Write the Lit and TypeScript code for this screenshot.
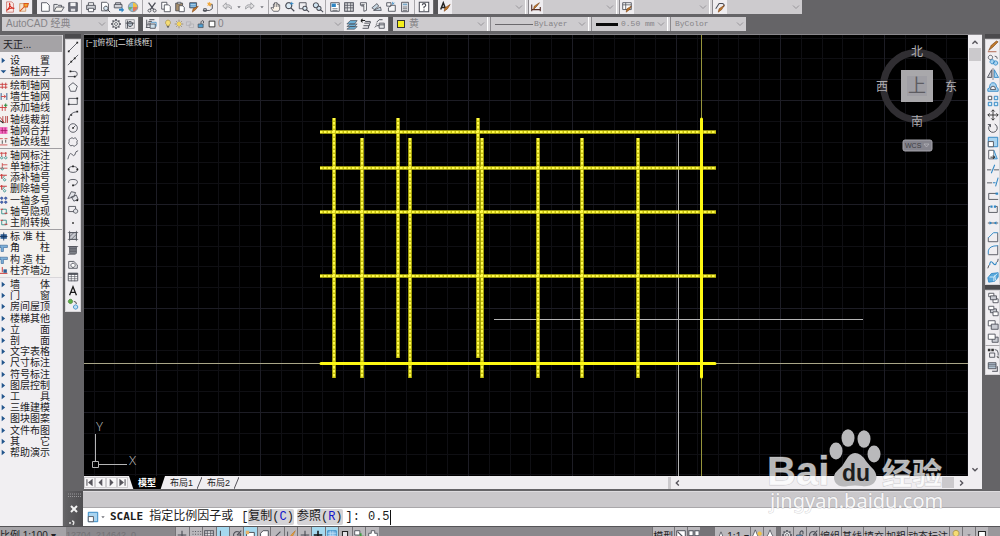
import { LitElement, html, svg, css } from "lit";
import { customElement, property } from "lit/decorators.js";

type Seg = [d: string, fill?: string, stroke?: string, width?: number];
const K = "#4a4c55";
const B = "#2f86c4";
const L = "#a9d4f0";
const O = "#c07a2c";
const N = "none";

/* Every icon is drawn in a 14 x 14 box. */
const ICONS: Record<string, Seg[]> = {
  pdf: [["M3 1h6l2 2v10h-8z", "#fbe9e6", "#b9483c", 0.7], ["M3 11c3-2 5-6 3.500-8c-1 2 2 6 5.500 5.500c-3-1-7 1-9 2.500z", N, "#d4271c", 1.3]],
  pdfedit: [["M2 3h7v9h-7z", "#f6e3cf", "#c0783c", 0.7], ["M2 12l5-5M7 3l5 0l-1 4l-4 0z", "#f0a52c", "#d8541c", 1.2]],
  doc: [["M3 2h6l3 3v7h-9z", "#fdfdfd", K, 1]],
  open: [["M1 12v-8h4l1 1h4v2", "#e8e8ea", K, 1], ["M1 12l3-5h9l-3 5z", "#f4f2ee", K, 1]],
  save: [["M2 2h10v10h-10z", "#70727c", K, 1], ["M4 2h6v4h-6z", "#f2f2f4"], ["M4.500 9h5v3h-5z", "#dcdce0"]],
  print: [["M4 5v-3h6v3", "#fff", K, 1], ["M2 5h10v5h-10z", "#d2d3d8", K, 1.1], ["M4 8.500h6v4h-6z", "#fff", K, 1]],
  preview: [["M3 1.500h6l2 2v8h-8z", "#fff", K, 1], ["M8 6a2.500 2.500 0 1 0 .1 0M10 10l3 3", "#dceaf4", K, 1.1]],
  plot: [["M3 4v-2h6v2M1.500 4h9v4h-9z", "#d2d3d8", K, 1], ["M7 9h3v-2l3 3.500l-3 3v-2h-3z", B]],
  pie: [["M7 1.500a5.500 5.500 0 1 0 .1 0z", "#8fc0dd", "#777a80", 0.8], ["M7 7v-5a5 5 0 0 1 5 5z", "#f0c046"], ["M7 7h5a5 5 0 0 1-5 5z", "#e27a5c"], ["M7 7l-4 4a5 5 0 0 1-1-4z", "#6fb36a"]],
  cut: [["M3 2l6 8M11 2l-6 8", N, K, 1.5], ["M4 9.500a1.700 1.700 0 1 0 .1 0M10 9.500a1.700 1.700 0 1 0 .1 0", N, K, 1.1]],
  copy: [["M2 1.500h6v8h-6z", "#fff", K, 1], ["M5 4.500h5l2 2v6h-7z", "#fff", K, 1]],
  paste: [["M2 2.500h8v9h-8z", "#a98f6a", K, 1], ["M4 1.500h4v2h-4z", "#ddd", K, 0.8], ["M6 5.500h4l2 2v5h-6z", "#fff", K, 1]],
  brush: [["M2 2h8v6h-8z", "#4e94c8", K, 1], ["M3 4h6M3 6h6", N, "#dcecf6", 0.8], ["M12 6l-3 4l-4 3l1-4z", O, "#8a4b17", 0.7]],
  match: [["M1 11h8l3-2M2 9v3h3v-3zM9 5l3-1v5", N, K, 1.1], ["M9 1l1 2l2 0l-2 2l0 2l-2-2l-2 1l1-2l-1-2l2 0z", "#f0a83c"]],
  undo: [["M2 6l4-4v2.500h3q4 1 3 5q-1-2-3-2.500h-3v2.500z", "#e0dfe1", "#8f9095", 0.9]],
  redo: [["M12 6l-4-4v2.500h-3q-4 1-3 5q1-2 3-2.500h3v2.500z", "#e0dfe1", "#8f9095", 0.9]],
  down: [["M5 6h4l-2 2.500z", "#707178"]],
  hand: [["M4 12l-3-4l1.500-.5l1.500 1v-5l1.300 0v-1.500h1.500v0h1.500v1.500h1.500v1h1.500v5l-1.500 2.500z", "#fbf3e8", K, 0.9], ["M5.500 3v4M7.500 3v4M9.500 4v3", N, K, 0.7]],
  zoomrt: [["M5.500 2a3.500 3.500 0 1 0 .1 0M8 8l4 4", "#dceaf4", K, 1.4], ["M9 1v4M7 3h4", N, B, 1]],
  zoomwin: [["M1.500 2h8v7h-8z", N, K, 1], ["M8 6a2.500 2.500 0 1 0 .1 0M10 10l3 3", "#dceaf4", K, 1.2]],
  zoomprev: [["M4.500 2a3 3 0 1 0 .1 0M8 6a2.500 2.500 0 1 0 .1 0M10 10l3 3", "#d0e4f2", K, 1.2]],
  props: [["M2 2h10v10h-10z", "#fff", K, 1], ["M3 3h5v4h-5z", B], ["M4 9h6M4 11h6M9.500 4h2", N, K, 0.8]],
  grid4: [["M2 2h10v10h-10z", "#e7e7ea", K, 1.2], ["M2 5h10M2 8h10M5 2v10M9 2v10", N, K, 0.9]],
  palette: [["M4 2h7v9l-3 1v-7h-4z", "#fff", K, 1], ["M5 4h4M5 6h3", N, K, 0.8]],
  sheets: [["M1 8l6-5l2 3l-5 4zM3 11l8-4l1 4z", "#c5d5e0", K, 0.9]],
  markup: [["M2 2h5v4h-5zM7 5h5v7h-8v-4z", "#f4f4f6", K, 1], ["M9 1v3M11 2l-2 2", N, B, 1]],
  calc: [["M3 1.500h8v11h-8z", "#e9e9ec", K, 1], ["M4.500 3h5v2h-5z", "#7aa8c8"], ["M4.500 7h5M4.500 9h5M4.500 11h5", N, K, 0.8]],
  help: [["M1.500 1.500h11v11h-11z", "#fff", K, 1.2], ["M5 5q0-2 2-2t2 2q0 1.300-2 2v1.500M7 10v1.500", N, K, 1.4]],
  textstyle: [["M2 10l3-8l3 8M3 7.500h4", N, "#222", 1.7], ["M13 4l-3 5l-4 3l1-4z", O, "#7b3f14", 0.7]],
  dimstyle: [["M2 4v8M12 7v5M2 10h10", N, "#55302a", 1.3], ["M11 2l-3 4l-4 4l1-4z", O, "#7b3f14", 0.7]],
  tablestyle: [["M2 2h10v8h-10z", "#fff", K, 1], ["M2 4.500h10M5.500 2v8", N, K, 0.9], ["M12 6l-2 4l-4 3l1-4z", O, "#7b3f14", 0.7]],
  leader: [["M2 9l4-6h4q3 1 1 4", N, K, 1.2], ["M12 5l-3 5l-4 3l1-4z", O, "#7b3f14", 0.7]],
  gear: [["M7 1.200v2M7 10.800v2M1.200 7h2M10.800 7h2M3 3l1.400 1.400M9.600 9.600l1.400 1.400M11 3l-1.400 1.400M4.400 9.600l-1.400 1.400", N, K, 1.8], ["M7 3a4 4 0 1 0 .1 0M7 5.300a1.700 1.700 0 1 0 .1 0", "#eee", K, 1]],
  wsgear: [["M2 2h10v10h-10z", N, "#8b8d94", 1], ["M7 4a3 3 0 1 0 .1 0M2 6h10M4 3v9", "#b0bcc6", K, 1.1]],
  layers: [["M5 2h6M4 4h4M3 6h4M2 8h4M1 11h5M2 2v9", N, K, 1.1], ["M6 7h6v5h-6z", "#cfe0ec", K, 1], ["M7 5h6v5", N, B, 0.9]],
  bulb: [["M7 1.500a3.600 3.600 0 0 0-2 6.500v1.500h4v-1.500a3.600 3.600 0 0 0-2-6.500z", "#f5dc74", "#9c8436", 0.8], ["M5.500 11h3", N, "#444", 1.6]],
  sun: [["M7 1v12M1 7h12M3 3l8 8M11 3l-8 8", N, "#8a774a", 0.9], ["M7 4a3 3 0 1 0 .1 0z", "#f4d55c"]],
  vpf: [["M2 4h6v5h-6zM6 7h6v5h-6z", "#cfced2", "#aaa9ae", 0.9]],
  lock: [["M3 7h7v5h-7z", "#4f9fd2", K, 1], ["M7 7v-3q1.500-3 3.500-1v3", N, K, 1.2]],
  square: [["M3 3h8v8h-8z", "#fff", "#222", 1.2]],
  layfirst: [["M1 7l4-4h8l-3 4zM1 10l4-3h8l-3 3zM1 13l4-3h8l-3 3z", "#6fb1d8", K, 0.8]],
  layprev: [["M5 6h7v-2h-6M4 9h7v-2M3 12h7v-3", N, K, 1.1], ["M1 3h5M1 3l2-2M1 3l2 2", N, "#222", 1.2]],
  laystate: [["M3 5l3-3h4M2 8l2-2M1 11l2-2h4", N, K, 1.1], ["M6 6h6v6h-6z", "#e7e7ea", K, 1], ["M6 8h6", N, K, 1]],
  /* draw */
  line: [["M2 12L12 2", N, K, 1], ["M1 11h2v2h-2zM11 1h2v2h-2z", "#222"]],
  xline: [["M1 13L13 1", N, K, 1], ["M4 8h2v2h-2zM8 4h2v2h-2z", "#222"]],
  pline: [["M4 4h5q3 0 3 3t-3 3h-8", N, K, 1], ["M3 3h2v2h-2zM8 9h2v2h-2z", "#222"]],
  polygon: [["M7 2l5 4l-2 6h-6l-2-6z", "#f2f2f4", K, 1]],
  rect: [["M2 4h10v7h-10z", N, K, 1], ["M1 10h2v2h-2zM11 3h2v2h-2z", "#222"]],
  arc: [["M2 12q1-8 10-9", N, K, 1], ["M1 11h2v2h-2zM4 6h2v2h-2zM11 2h2v2h-2z", "#222"]],
  circle: [["M7 2a5 5 0 1 0 .1 0M7 7l3-3", N, K, 1], ["M6 6h2v2h-2z", "#222"]],
  cloud: [["M4 3q2-2 3.500 0q3-2 3.500 1q2 1 .5 3q1.500 3-1.500 4q-1.500 2-3.500 0q-3 1.500-3.500-1q-2-1-.5-3.500q-1-3 1.500-3.500z", N, K, 1]],
  spline: [["M1 12q2-9 4.500-6t3.500 1q1-5 4-5", N, K, 1]],
  ellipse: [["M7 4a5.500 3.500 0 1 0 .1 0", N, K, 1], ["M6 3h2v2h-2zM1 6.500h2v2h-2zM11 6.500h2v2h-2z", "#222"]],
  earc: [["M2 8q-1-4 5-4t5 4q-1 3-5 3", N, K, 1], ["M6 10h2v2h-2z", "#222"]],
  insert: [["M1 10l4-8l5 1l-2 5zM5 8l6-2l2 5l-5 2z", "#e2e3e8", K, 1], ["M11 11h2v2h-2z", "#111"]],
  block: [["M2 4h8v6h-8z", N, K, 1], ["M10 7a2.500 2.500 0 1 0 .1 0", "#e2e3e8", K, 1]],
  point: [["M6 6h2v2h-2z", "#222"]],
  hatch: [["M3 3h8v8h-8z", "#c8c9d0", K, 0.8], ["M1 3h12M1 11h12M3 1v12M11 1v12M3 8l5-5M5 11l6-6", N, K, 0.8]],
  gradient: [["M3 3h8v8h-8z", "#8d8f98", K, 0.8], ["M1 3h12M3 5h8M3 7h8M3 9h8M1 12h9", N, K, 0.9]],
  region: [["M2 12v-8h6l4 4v4z", N, K, 1], ["M7 6a2.500 2.500 0 1 0 .1 0", "#fff", K, 1]],
  table: [["M1.500 2.500h11v9h-11z", "#fff", K, 1], ["M1.500 3.500h11", N, K, 2], ["M1.500 6.500h11M1.500 9h11M5 3v9M9 3v9", N, K, 0.7]],
  mtext: [["M3 12l4-10l4 10M4.500 8.500h5", N, "#1a1a1a", 1.5]],
  addsel: [["M4 1.500a2.500 2.500 0 1 0 .1 0z", "#5eb046", "#3a7a2c", 0.8], ["M10 8a2.500 2.500 0 1 0 .1 0z", "#bfe0f4", B, 1], ["M8 4q3 0 3 3", N, "#333", 1]],
  /* modify */
  erase: [["M13 1l-6 6l-5 4l3-6l6-5z", O, "#774115", 0.7], ["M1 12.500h10", N, "#a8543c", 1]],
  copyobj: [["M4 1.500a2.500 2.500 0 1 0 .1 0M9 2.500q3 0 3 3", N, K, 1], ["M6 6.500a2.500 2.500 0 1 0 .1 0M10 8a2.500 2.500 0 1 0 .1 0", L, B, 1]],
  mirror: [["M5.500 2v9h-5z", "#cfd0d6", K, 1], ["M8.500 2v9h5z", L, B, 1], ["M7 0v14", N, K, 0.7]],
  offset: [["M1 12q-1-4 2-4q0-6 4-6t4 5q3 1 2 5z", L, B, 1], ["M4 10q0-4 3-4t3 4z", "#f2f2f4", K, 1]],
  array: [["M1.500 1.500h4v4h-4z", "#fff", K, 1.1], ["M8.500 1.500h4v4h-4zM1.500 8.500h4v4h-4zM8.500 8.500h4v4h-4z", "#d4ebf8", B, 1.1]],
  move: [["M7 1v12M1 7h12M5 3l2-2l2 2M5 11l2 2l2-2M3 5l-2 2l2 2M11 5l2 2l-2 2", N, "#333", 1.1]],
  rotate: [["M4 3a5 5 0 1 0 5-.5M4 3v3M4 3h-3", N, K, 1.1]],
  scale: [["M1.500 1.500h11v11h-11z", L, B, 1.1], ["M1.500 6.500h6v6h-6z", "#fff", K, 1]],
  stretch: [["M2 1.500h6v10h-6z", "#fff", K, 1], ["M8 1.500l4 10h-4", L, B, 1], ["M4 9.500h5M7 7.500l2 2l-2 2", N, "#222", 1.1]],
  trim: [["M0 8h5M8 8h6", N, K, 1], ["M9 2l-4 10", N, B, 1.2]],
  extend: [["M0 8h6", N, K, 1], ["M7 8h3M13 2l-3 10", N, B, 1.2]],
  breakpt: [["M11 4h-9v7h11", N, K, 1], ["M10 3h3v2.500h-3z", B]],
  breakit: [["M4 4h-2v7h10v-7h-2", N, K, 1], ["M4 3h2.500v2.500h-2.500zM8 3h2.500v2.500h-2.500z", B]],
  join: [["M1 7h12", N, K, 1], ["M3 5l3 2l-3 2zM11 5l-3 2l3 2z", B]],
  chamfer: [["M1.500 12.500v-5M12.500 2v10.500h-11", N, K, 1], ["M1.500 8l6-6h5", N, B, 1.1]],
  fillet: [["M1.500 12.500h11v-11", N, K, 1], ["M1.500 12v-4q1-6 11-6", N, B, 1.1]],
  blend: [["M1 12q1-4 2-4M11 5q2 0 2-4", N, K, 1.1], ["M3 8q1-6 4-2t4-1", N, B, 1.3]],
  explode: [["M1 8l4-5l8-1l0 5l-4 5l-7 1z", "#5aa9dc", B, 1], ["M3 7h5v5M8 7l4-4M10 11l-1-6", N, "#e6f3fb", 1]],
  front: [["M2 1.500h6v4h-6zM7 8h6v4.500h-6z", "#fff", K, 1], ["M4 4.500h7v4.500h-7z", "#c9cbd2", K, 1]],
  back: [["M4 4.500h7v4.500h-7z", "#c9cbd2", K, 1], ["M2 1.500h6v4h-6zM7 8h6v4.500h-6z", "#fff", K, 1]],
  above: [["M1.500 2h8v6h-8z", "#fff", K, 1], ["M5 6h8v6h-8z", "#c9cbd2", K, 1]],
  under: [["M6 6h7v6h-7z", "#c9cbd2", K, 1], ["M1.500 2.500h8v6h-8z", "#fff", K, 1]],
  annofront: [["M1 2h3v3h-3zM5 2h3v3h-3z", "#333"], ["M3 7h6v5h-6zM9 3q4 0 4 4v3", N, K, 1], ["M11 11h2.500v2.500z", "#111"]],
  hatchback: [["M1.500 2h9v7h-9z", "#b3c3d2", K, 1], ["M1.500 4h9M1.500 6h9", N, K, 0.7], ["M12 6v6h-6", N, K, 1.2]],
  /* drafting modes */
  infer: [["M2 7h10M7 2v10", N, K, 1.3], ["M7 8h4v4h-4z", K]],
  snap: [["M3 3h1M6 3h1M9 3h1M12 3h1M3 6h1M6 6h1M9 6h1M12 6h1M3 9h1M6 9h1M9 9h1M3 12h1M6 12h1M9 12h1", N, K, 1.2]],
  ortho: [["M4 2v9h9", N, K, 1.2]],
  polar: [["M7 3a4 4 0 1 0 .1 0M7 7l5-5M7 7h5", N, K, 1.2]],
  osnap: [["M3 4h9v8h-9z", "#fff", K, 1.1], ["M2 2h4v4h-4z", "#e7b36a"]],
  osnap3: [["M3 5l3-3h6v7l-3 3h-6z", "#fff", K, 1.1]],
  otrack: [["M2 12L11 3M2 12h10", N, K, 1.2]],
  ducs: [["M3 3v9h9", N, K, 1], ["M12 2l-4 4l-2 3l3-1z", "#f0a83c", O, 0.8]],
  cross: [["M7 2v10M2 7h10", N, "#111", 1.8]],
  plus: [["M5 2h4v3h3v4h-3v3h-4v-3h-3v-4h3z", "#fff", K, 1]],
  tpy: [["M2 2h10v10h-10z", "#7db7e4", B, 1], ["M2 5h10M2 8h10M5 2v10M8 2v10", N, "#c9e4f7", 0.8]],
  qp: [["M4 3h6v9h-6z", "#e4e4e8", "#222", 1.2]],
  sc: [["M2 2h6v5h-6z", "#fff", K, 1], ["M9 5v8M5 9h8", N, "#3e9b3e", 2]],
  person: [["M7 1l2 5l4 6h-4l-2-3l-2 3h-4l4-6z", "#fff", K, 0.9]],
  personon: [["M5 1l2 5l3 6h-3l-2-3l-2 3h-3l3-6z", "#fff", K, 0.9], ["M10 3a2.500 2.500 0 1 0 .1 0z", "#f0c046"]],
  page: [["M2 2h10v10h-10z", "#fff", K, 1.1], ["M3 3l8 8", N, K, 1.4]],
  views: [["M1 2h5v6h-5zM8 2h5v6h-5z", "#fff", K, 1.2]],
  /* axis-net commands */
  tri: [["M3 2l6 5l-6 5z", "#22558c"]],
  tridown: [["M1 5h10l-5 5z", "#22558c"]],
  net: [["M4 2v11M10 2v11M0 5h13M0 10h13", N, "#c93a3a", 1.5]],
  wallnet: [["M2 1v12M12 1v12", N, "#22558c", 1.6], ["M2 7h8M7 4l3 3l-3 3", N, "#c93a3a", 1.5]],
  addax: [["M4 2v11M9 6v7M0 7h12", N, "#c93a3a", 1.5], ["M10 0v6M7 3h6", N, "#2d8a3a", 1.8]],
  trimax: [["M0 3l8 10M5 1v12M10 1v12M13 1v12", N, "#b03030", 1.5], ["M0 9l6 4", N, "#222", 2]],
  merge: [["M0 1h13v12h-13z", "#f36cc0"], ["M4 2v10M9 2v10M1 7h12", N, "#a01860", 1.3]],
  linetype: [["M0 2h5M8 2h5M0 13h13", N, "#c93a3a", 1.4], ["M4 5v6M10 4v5", N, "#333", 1.4]],
  dim2: [["M0 3h12M3 1v8M10 1v8", N, "#c93a3a", 1.5], ["M3 9a2 2 0 1 0 .1 0M10 9a2 2 0 1 0 .1 0", N, "#2a8a86", 1.5]],
  dim1: [["M0 10h13M4 1v8M4 4h9", N, "#c93a3a", 1.4], ["M4 9a2 2 0 1 0 .1 0", N, "#2a8a86", 1.5]],
  dimadd: [["M0 3h12M3 1v8", N, "#c93a3a", 2], ["M8 9a2 2 0 1 0 .1 0M8 4l-4 5", N, "#2a8a86", 1.5]],
  multi: [["M3 1a2 2 0 1 0 .1 0M10 1a2 2 0 1 0 .1 0M3 8a2 2 0 1 0 .1 0M10 8a2 2 0 1 0 .1 0", "#4f6fb8", "#223f8c", 1.3]],
  hide: [["M3 3h8v8h-8z", N, "#2a8a86", 1.5], ["M1 3h4M8 10h5", N, "#c93a3a", 2]],
  column: [["M1 3h11v8h-11z", "#2d5d94"], ["M6.500 0v14M0 7h13", N, "#16365c", 1.5]],
  corner: [["M0 3h13v4h-7v7h-4v-7h-2z", "#7db0d8", "#2d5d94", 1]],
  edge: [["M0 12h13M4 1v9", N, "#c93a3a", 1.7], ["M6 5h6v6h-6z", "#2d5d94"]],
};

function icon(name: string) {
  return html`<svg class="ico" viewBox="0 0 14 14" aria-hidden="true">
    ${(ICONS[name] ?? []).map(
      ([d, f, s, w]) => svg`<path d=${d} fill=${f ?? N} stroke=${s ?? N} stroke-width=${w ?? 0}></path>`
    )}
  </svg>`;
}

const chevron = html`<svg class="chev" viewBox="0 0 8 8" aria-hidden="true"><path d="M1 2.500l3 3l3-3" fill="none" stroke="#98969a"></path></svg>`;

const shared = css`
  * { box-sizing: border-box; }
  :host {
    font-family: "Liberation Sans", "Noto Sans CJK SC", sans-serif;
    font-size: 10px;
    line-height: 14px;
    color: #232225;
  }
  button, select, input { font: inherit; color: inherit; margin: 0; padding: 0; border: 0; background: none; border-radius: 0; outline: none; }
  button { display: flex; align-items: center; justify-content: center; flex: none; }
  .ico { width: 12px; height: 12px; display: block; flex: none; overflow: visible; }
`;

@customElement("cad-toolbars")
class CadToolbars extends LitElement {
  static styles = [shared, css`
    :host { display: flex; flex-direction: column; gap: 3px; padding-bottom: 3px; background: #656467; }
    .row { display: flex; height: 14px; padding-left: 2px; }
    .group { display: flex; flex: none; background: #efedf0; }
    .grip { flex: none; width: 5px; background: #565558; border-left: 1px solid #6d6c6f; }
    .seg { display: flex; padding: 0 2px; border-left: 1px solid #a9a7ab; }
    .seg.first { border: 0; padding: 0 1px; }
    .seg.tight { padding: 0; }
    .seg button { width: 14px; }
    .seg button.drop { width: 9px; }
    .combo { display: flex; align-items: center; flex: none; background: #cdcbce; padding: 0 2px 0 4px; color: #858387; gap: 1px; }
    .combo select { flex: 1; min-width: 0; appearance: none; height: 14px; }
    .mono { font-family: "Liberation Mono", "Noto Sans CJK SC", monospace; font-size: 8px; }
    .chev { width: 8px; height: 8px; flex: none; }
    .combo .ico { width: 10px; height: 10px; }
    .w73 { width: 73px; } .w75 { width: 75px; } .w94 { width: 94px; } .w97 { width: 97px; } .w106 { width: 106px; } .w185 { width: 185px; }
    .tool { width: 14px; }
    .gap { width: 4px; flex: none; background: #d9d7da; border-right: 1px solid #8b898d; border-left: 1px solid #fff; }
    .swatch { width: 8px; height: 8px; background: #f4ee1c; border: 1px solid #333; margin-right: 3px; }
    .thin { width: 38px; height: 1px; background: #6a686c; }
    .thick { width: 22px; height: 3px; background: #0a0a0a; margin-right: 2px; }
  `];

  private seg(names: string[], cls = "") {
    return html`<div class="seg ${cls}">${names.map((n) => html`<button class=${n === "down" ? "drop" : ""} aria-label=${n}>${icon(n)}</button>`)}</div>`;
  }

  private combo(label: string, text: string, cls: string, lead: unknown = "") {
    return html`<div class="combo ${cls}">${lead}<select aria-label=${label}><option>${text}</option></select>${chevron}</div>`;
  }

  render() {
    return html`
      <div class="row">
        <div class="group">${this.seg(["pdf", "pdfedit"], "first")}</div>
        <div class="grip"></div>
        <div class="group">
          ${this.seg(["doc", "open", "save"], "first")}
          ${this.seg(["print", "preview", "plot", "pie"])}
          ${this.seg(["cut", "copy", "paste", "brush", "match"])}
          ${this.seg(["undo", "down", "redo", "down"])}
          ${this.seg(["hand", "zoomrt", "zoomwin", "zoomprev"], "tight")}
          ${this.seg(["props", "grid4", "palette", "sheets", "markup", "calc"])}
          ${this.seg(["help"])}
        </div>
        <div class="grip"></div>
        <div class="group">
          <button class="tool" aria-label="文字样式">${icon("textstyle")}</button>
          ${this.combo("文字样式列表", "", "w73")}
          <div class="gap"></div>
          <button class="tool" aria-label="标注样式">${icon("dimstyle")}</button>
          ${this.combo("标注样式列表", "", "w73")}
          <div class="gap"></div>
          <button class="tool" aria-label="表格样式">${icon("tablestyle")}</button>
          ${this.combo("表格样式列表", "", "w75")}
          <div class="gap"></div>
          <button class="tool" aria-label="引线样式">${icon("leader")}</button>
          ${this.combo("引线样式列表", "", "w75")}
        </div>
      </div>
      <div class="row">
        <div class="group">
          ${this.combo("工作空间", "AutoCAD 经典", "w106")}
          ${this.seg(["gear", "wsgear"], "first")}
        </div>
        <div class="grip"></div>
        <div class="group">
          ${this.seg(["layers"], "first")}
          ${this.combo("图层", "0", "w185", ["bulb", "sun", "vpf", "lock", "square"].map(icon))}
          ${this.seg(["layfirst", "layprev", "laystate"], "first")}
        </div>
        <div class="grip"></div>
        <div class="group">
          ${this.combo("颜色", "黄", "w94", html`<span class="swatch"></span>`)}
          <div class="gap"></div>
          ${this.combo("线型", "ByLayer", "w97 mono", html`<span class="thin"></span>`)}
          <div class="gap"></div>
          ${this.combo("线宽", "0.50 mm", "w75 mono", html`<span class="thick"></span>`)}
          <div class="gap"></div>
          ${this.combo("打印样式", "ByColor", "w75 mono")}
        </div>
      </div>`;
  }
}

@customElement("cad-menu")
class CadMenu extends LitElement {
  static styles = [shared, css`
    :host { display: block; background: #f1eff2; overflow: hidden; border-right: 1px solid #d9d7da; }
    .title { height: 17px; line-height: 17px; padding-left: 3px; background: #a5a3a6; margin: 0 0 2px; font-weight: 400; font-size: 10px; border-top: 1px solid #c0bec1; }
    .set { display: grid; grid-auto-rows: 1fr; margin: 0; padding: 1px 0; list-style: none; border-top: 1px solid #a19fa2; }
    .set.top { border: 0; }
    .set.sub { background: #f3f1ef; }
    .n2 { height: 24px; } .n6 { height: 70px; } .n7 { height: 81px; } .n4 { height: 48px; } .n16 { height: 182px; border-color: #d9d7da; }
    .set button { width: 100%; height: 100%; justify-content: flex-start; gap: 3px; white-space: pre; line-height: 11px; }
    .set .ico { width: 8px; height: 9px; margin-right: -1px; }
  `];

  private list(cls: string, items: [string, string][]) {
    return html`<ul class="set ${cls}">${items.map(([i, t]) => html`<li><button>${icon(i)}<span>${t}</span></button></li>`)}</ul>`;
  }

  render() {
    const more = ["墙　　体", "门　　窗", "房间屋顶", "楼梯其他", "立　　面", "剖　　面", "文字表格", "尺寸标注", "符号标注", "图层控制", "工　　具", "三维建模", "图块图案", "文件布图", "其　　它", "帮助演示"];
    return html`
      <h2 class="title">天正...</h2>
      ${this.list("top n2", [["tri", "设　　置"], ["tridown", "轴网柱子"]])}
      ${this.list("sub n6", [["net", "绘制轴网"], ["wallnet", "墙生轴网"], ["addax", "添加轴线"], ["trimax", "轴线裁剪"], ["merge", "轴网合并"], ["linetype", "轴改线型"]])}
      ${this.list("sub n7", [["dim2", "轴网标注"], ["dim1", "单轴标注"], ["dimadd", "添补轴号"], ["dimadd", "删除轴号"], ["multi", "一轴多号"], ["hide", "轴号隐现"], ["hide", "主附转换"]])}
      ${this.list("sub n4", [["column", "标 准 柱"], ["corner", "角　　柱"], ["corner", "构 造 柱"], ["edge", "柱齐墙边"]])}
      ${this.list("n16", more.map((t) => ["tri", t] as [string, string]))}`;
  }
}

@customElement("cad-rail")
class CadRail extends LitElement {
  static styles = [shared, css`
    :host { display: block; }
    .head { height: 5px; background: #4b4a4d; border-bottom: 1px solid #6d6c6f; }
    .tools { display: grid; grid-auto-rows: 1fr; background: #f0eef1; border: 1px solid #d7d5d8; }
    .tools button { width: 100%; height: 100%; }
    .draw { height: 273px; }
    .modify { height: 246px; }
    .order { height: 56px; border-bottom-color: #a9a7ab; }
    .anno { height: 29px; border-top: 0; }
  `];
  @property({ type: Array }) sets: { kind: string; head: boolean; icons: string[] }[] = [];

  render() {
    return this.sets.map((s) => html`
      ${s.head ? html`<div class="head"></div>` : ""}
      <div class="tools ${s.kind}">${s.icons.map((n) => html`<button aria-label=${n}>${icon(n)}</button>`)}</div>`);
  }
}

@customElement("cad-drawing")
class CadDrawing extends LitElement {
  static styles = [shared, css`
    :host { display: block; position: relative; background: #000; overflow: hidden; min-width: 0; }
    .sheet { display: block; width: 100%; height: 100%; position: absolute; inset: 0; }
    .caption { position: relative; margin: 0; padding: 2px 2px; font-size: 8px; line-height: 12px; color: #d8d8d8; font-weight: 400; }
    .cube { position: absolute; top: 6px; right: 6px; width: 90px; height: 116px; font-size: 12px; }
    .compass { fill: #aeacb0; text-anchor: middle; }
    .axis { fill: #b5b5b5; font-size: 13px; font-family: "Noto Sans", sans-serif; font-weight: 300; }
  `];

  render() {
    const rows = [97, 133, 177, 241];
    const cols: [number, number, number][] = [[250, 83, 343], [278, 103, 343], [314, 83, 323], [326, 103, 343], [394, 83, 323], [398, 103, 343], [454, 103, 343], [498, 103, 343], [554, 103, 343]];
    const d = rows.map((y) => `M236 ${y}H632`).join("") + cols.map(([x, a, b]) => `M${x} ${a}V${b}`).join("");
    const minor = [21, 42, 62, 83];
    return html`
      <svg class="sheet" role="img" aria-label="轴网">
        <defs>
          <pattern id="g" x="72" y="65" width="104" height="104" patternUnits="userSpaceOnUse">
            <path d=${minor.map((m) => `M${m}.500 0V104M0 ${m}.500H104`).join("")} stroke="#0f0f13"></path>
            <path d="M.5 0V104M0 .5H104" stroke="#1d1d25"></path>
          </pattern>
        </defs>
        <rect width="100%" height="100%" fill="url(#g)"></rect>
        <line x1="0" x2="100%" y1="328.500" y2="328.500" stroke="#a9a688"></line>
        <line x1="617.500" x2="617.500" y1="0" y2="100%" stroke="#96943c"></line>
        <path d="M594.500 99V460M410 284.500H779" stroke="#b4b4b4" stroke-width="1" fill="none"></path>
        <path d=${d} stroke="#c8c30e" stroke-width="3.600" fill="none"></path>
        <path d=${d} stroke="#fffb4a" stroke-width="2" stroke-dasharray="2.500 1.500" fill="none"></path>
        <path d="M617.500 84V342M237 328.500H631" stroke="#fdf813" stroke-width="3" stroke-linecap="round" fill="none"></path>
        <path d="M11.500 426V399M14 429.500H43M8.500 426.500h6v6h-6z" stroke="#b5b5b5" fill="none"></path>
        <text class="axis" x="12" y="396">Y</text>
        <text class="axis" x="45" y="430">X</text>
      </svg>
      <p class="caption">[−][俯视][二维线框]</p>
      <svg class="cube" viewBox="0 0 90 116" role="img" aria-label="视图方位">
        <circle cx="45" cy="45" r="33.500" fill="none" stroke="#302e32" stroke-width="7"></circle>
        <rect x="29" y="29" width="32" height="32" fill="#a9a8ab"></rect>
        <rect x="35" y="35" width="20" height="20" fill="#a09fa5"></rect>
        <text class="compass" x="45" y="15">北</text>
        <text class="compass" x="10" y="50">西</text>
        <text class="compass" x="79" y="50">东</text>
        <text class="compass" x="45" y="85">南</text>
        <text x="45" y="51" text-anchor="middle" font-size="18" fill="#5d5c62">上</text>
        <rect x="31" y="99" width="29" height="11" rx="2" fill="#85848d" stroke="#a5a4ab"></rect>
        <text x="33" y="107" font-size="7" fill="#3d3c42">WCS</text>
        <path d="M52 103h5l-2.500 3z" fill="none" stroke="#b9b8bf" stroke-width="0.700"></path>
      </svg>`;
  }
}

@customElement("cad-command")
class CadCommand extends LitElement {
  static styles = [shared, css`
    :host { display: flex; background: #cac8cb; height: 35px; }
    .side { width: 18px; flex: none; background: linear-gradient(90deg, #626164, #4f4e51); }
    .side .ico { width: 18px; height: 35px; }
    .main { flex: 1; min-width: 0; display: flex; flex-direction: column; }
    .log { height: 17px; border-bottom: 1px solid #a9a7aa; border-top: 1px solid #dddbde; }
    .line { flex: 1; display: flex; align-items: center; background: #fff; padding-left: 4px; font: 12px/18px "Liberation Mono", "Noto Sans CJK SC", monospace; white-space: pre; color: #1d1d1d; }
    .line b { font-family: "DejaVu Sans Mono", monospace; font-size: 11px; margin-right: 6px; }
    .line .drop { width: 8px; margin-right: 3px; }
    .line label { display: flex; align-items: center; }
    .line .opt { background: #d5d3d6; height: 16px; line-height: 16px; border-radius: 2px; margin-right: 3px; }
    .opt i { font-style: normal; color: #1414c8; }
    .bracket { margin-left: 8px; }
    .line input { field-sizing: content; margin-left: 8px; border-right: 1px solid #111; height: 15px; }
  `];
  render() {
    return html`
      <div class="side">
        <svg class="ico" viewBox="0 0 18 35" aria-hidden="true">
          <path d="M3 3h13M3 5.500h13" stroke="#98979a" stroke-dasharray="1 1"></path>
          <path d="M6 15l6 6M12 15l-6 6" stroke="#f2f2f2" stroke-width="2"></path>
          <path d="M4 32h2M7 30q3 0 1 4" stroke="#e2e2e2" stroke-width="1.500" fill="none"></path>
        </svg>
      </div>
      <div class="main">
        <div class="log"></div>
        <div class="line">
          ${icon("scale")}<button class="drop" aria-label="最近使用的命令">${icon("down")}</button>
          <label for="cmd"><b>SCALE</b>指定比例因子或<span class="bracket">[</span></label><button class="opt">复制(<i>C</i>)</button><button class="opt">参照(<i>R</i>)</button>]:<input id="cmd" size="3" value="0.5" />
        </div>
      </div>`;
  }
}

@customElement("cad-status")
class CadStatus extends LitElement {
  static styles = [shared, css`
    :host { display: flex; height: 10px; overflow: hidden; background: #8a888c; border-top: 1px solid #555457; align-items: flex-start; white-space: nowrap; }
    .scale { width: 66px; flex: none; justify-content: flex-start; gap: 3px; padding-top: 2px; background: #a5a3a7; }
    .coords { width: 109px; flex: none; padding-top: 1px; color: #737175; font-size: 9px; }
    .modes { display: grid; grid-auto-flow: column; grid-auto-columns: 1fr; width: 204px; flex: none; }
    .cell { height: 15px; background: #bab8bc; border-left: 1px solid #757377; }
    .modes .cell { width: 100%; }
    .cell.on { background: #a5d8ee; }
    .right { display: flex; margin-left: auto; }
    .text { padding: 2px 1px 0 0; height: 17px; }
    .pad { width: 14px; flex: none; background: #767478; }
    .thin { width: 4px; }
    .pane { width: 12px; background: #9a989c; border: 0; }
  `];
  render() {
    const modes: [string, boolean][] = [["infer", false], ["snap", false], ["grid4", false], ["ortho", true], ["polar", false], ["osnap", true], ["osnap3", false], ["otrack", false], ["ducs", false], ["infer", false], ["cross", true], ["tpy", true], ["qp", false], ["sc", false], ["plus", false]];
    const b = (n: string) => html`<button class="cell" aria-label=${n}>${icon(n)}</button>`;
    const t = (s: string) => html`<button class="cell text">${s}</button>`;
    return html`
      <button class="scale">比例 1:100 <span>▾</span></button>
      <span class="coords">12704, 214642, 0</span>
      <div class="modes">${modes.map(([n, on]) => html`<button class="cell ${on ? "on" : ""}" aria-label=${n}>${icon(n)}</button>`)}</div>
      <div class="right">
        ${t("模型")}${b("page")}${b("views")}<span class="pad"></span>
        <button class="cell text">${icon("person")}1:1 ▾</button>${b("personon")}${b("person")}<span class="pad thin"></span>
        ${b("gear")}${b("lock")}${b("polar")}${t("编组")}${t("基线")}${t("填充")}${t("加粗")}${t("动态标注")}
        ${b("bulb")}${b("down")}${b("square")}<span class="cell pane"></span>
      </div>`;
  }
}

@customElement("app-root")
class AppRoot extends LitElement {
  static styles = [shared, css`
    :host { display: flex; flex-direction: column; height: 100vh; overflow: hidden; background: #656467; position: relative; }
    .body { flex: 1; min-height: 0; display: flex; gap: 2px; }
    cad-menu { width: 63px; flex: none; margin-top: 1px; }
    .desk { flex: 1; min-width: 0; display: flex; flex-direction: column; gap: 2px; }
    .work { flex: 1; min-height: 0; display: flex; gap: 3px; }
    .left { width: 16px; flex: none; }
    .right { width: 15px; flex: none; overflow: hidden; }
    .view { flex: 1; min-width: 0; display: grid; grid-template: 1fr 13px / 1fr 14px; border-top: 1px solid #8b898d; background: #f0eef1; }
    .vbar { display: flex; flex-direction: column; align-items: center; background: #f0eef1; }
    .vbar button, .hbar button { width: 14px; height: 13px; }
    .vthumb { width: 12px; height: 13px; background: #cbc9cc; }
    .grow { flex: 3; }
    .wide { flex: 5; }
    .hbar { display: flex; align-items: center; min-width: 0; white-space: nowrap; }
    .hbar .nav { width: 11px; height: 11px; border: 1px solid #cfcdd0; background: #f8f7f8; }
    .nav .ico { width: 9px; height: 9px; }
    .hbar .tab { width: auto; padding: 0 4px 0 5px; font-size: 9px; }
    .hbar .tab.current { background: #000; color: #fff; width: 36px; margin-left: 1px; padding: 0; font-weight: 700; clip-path: polygon(0 0, 100% 0, 88% 100%, 12% 100%); }
    .slash { width: 5px; height: 12px; flex: none; }
    .split { width: 3px; height: 12px; background: #cbc9cc; }
    .hthumb { width: 12px; height: 11px; background: #cbc9cc; }
    .mark { position: absolute; right: 50px; bottom: 16px; width: 184px; height: 96px; pointer-events: none; }
    .mark text { fill: rgba(255, 255, 255, 0.72); stroke: rgba(150, 150, 155, 0.4); stroke-width: 1px; paint-order: stroke; }
    .mark .big { font: 700 40px "Liberation Sans", sans-serif; }
    .mark .cn { font: 700 30px "Noto Sans CJK SC", sans-serif; }
    .mark .url { font: 20px "Noto Sans", sans-serif; fill: rgba(255, 255, 255, 0.9); }
    .mark .du { font: 700 23px "Liberation Sans", sans-serif; fill: #1d1d1d; stroke: none; }
  `];

  private glyph(d: string, fill = N) {
    return html`<svg class="ico" viewBox="0 0 14 14" aria-hidden="true"><path d=${d} fill=${fill} stroke="#55535a" stroke-width="1.600"></path></svg>`;
  }

  render() {
    const draw = ["line", "xline", "pline", "polygon", "rect", "arc", "circle", "cloud", "spline", "ellipse", "earc", "insert", "block", "point", "hatch", "gradient", "region", "table", "mtext", "addsel"];
    const modify = ["erase", "copyobj", "mirror", "offset", "array", "move", "rotate", "scale", "stretch", "trim", "extend", "breakpt", "breakit", "join", "chamfer", "fillet", "blend", "explode"];
    const slash = html`<svg class="slash" viewBox="0 0 5 12" aria-hidden="true"><path d="M5 0L0 12" stroke="#55535a"></path></svg>`;
    return html`
      <cad-toolbars></cad-toolbars>
      <div class="body">
        <cad-menu></cad-menu>
        <div class="desk">
          <div class="work">
            <cad-rail class="left" .sets=${[{ kind: "draw", head: true, icons: draw }]}></cad-rail>
            <div class="view">
              <cad-drawing></cad-drawing>
              <div class="vbar">
                <button aria-label="向上">${this.glyph("M4 9l3-3l3 3")}</button>
                <div class="vthumb"></div><div class="grow"></div>
                <button aria-label="向下">${this.glyph("M4 5l3 3l3-3")}</button>
              </div>
              <div class="hbar">
                <button class="nav" aria-label="第一个">${this.glyph("M3 2v10M11 3v8l-5-4z", "#55535a")}</button>
                <button class="nav" aria-label="上一个">${this.glyph("M9 3v8l-4-4z", "#55535a")}</button>
                <button class="nav" aria-label="下一个">${this.glyph("M5 3v8l4-4z", "#55535a")}</button>
                <button class="nav" aria-label="最后一个">${this.glyph("M11 2v10M3 3v8l5-4z", "#55535a")}</button>
                <button class="tab current">模型</button>
                <button class="tab">布局1</button>${slash}
                <button class="tab">布局2</button>${slash}
                <div class="wide"></div>
                <div class="split"></div>
                <button aria-label="向左">${this.glyph("M8 4l-3 3l3 3")}</button>
                <div class="grow"></div>
                <div class="hthumb"></div>
                <button aria-label="向右">${this.glyph("M6 4l3 3l-3 3")}</button>
              </div>
            </div>
            <cad-rail class="right" .sets=${[
              { kind: "modify", head: true, icons: modify },
              { kind: "order", head: true, icons: ["front", "back", "above", "under"] },
              { kind: "anno", head: false, icons: ["annofront", "hatchback"] },
            ]}></cad-rail>
          </div>
          <cad-command></cad-command>
        </div>
      </div>
      <cad-status></cad-status>
      <svg class="mark" viewBox="0 0 184 96" role="img" aria-label="Baidu 经验">
        <text class="big" x="1" y="61">Bai</text>
        <g fill="#b9b9bb">
          <ellipse cx="70" cy="27" rx="6.500" ry="8.500"></ellipse>
          <ellipse cx="82" cy="14" rx="6.500" ry="8.700"></ellipse>
          <ellipse cx="98" cy="15" rx="6.500" ry="8.700"></ellipse>
          <ellipse cx="108" cy="30" rx="6.500" ry="8.500"></ellipse>
          <path d="M89 29q6 0 11 8q4 5 8 9q5 7 0 13q-5 4-12 3q-7-1-14 0q-9 2-13-4q-3-7 3-12q5-4 8-10q4-7 9-7z"></path>
        </g>
        <text class="du" x="76" y="57">du</text>
        <text class="cn" x="116" y="60">经验</text>
        <text class="url" x="4" y="84">jingyan.baidu.com</text>
      </svg>`;
  }
}
